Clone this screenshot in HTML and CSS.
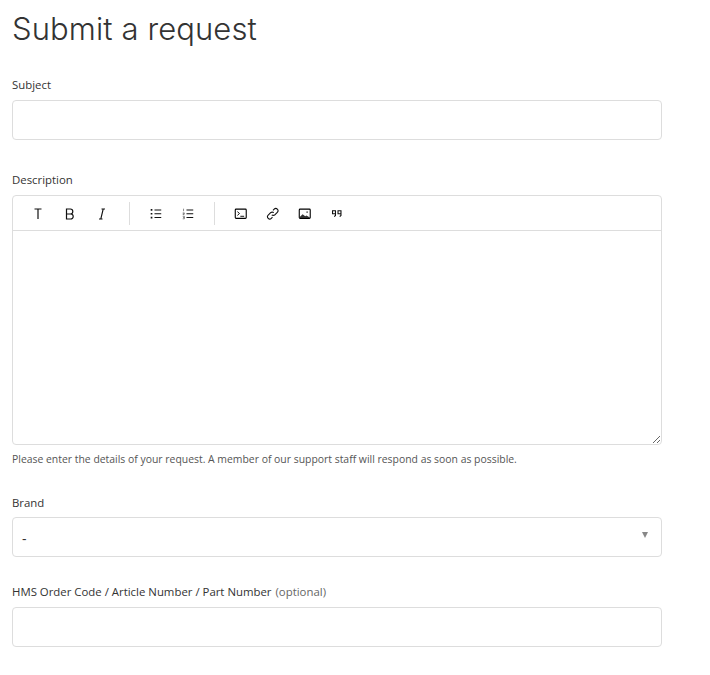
FILE: index.html
```html
<!DOCTYPE html>
<html lang="en">

<head>
  <meta charset="UTF-8" />
  <title>Submit a request</title>
  <meta name="viewport" content="width=device-width, initial-scale=1.0" />
  <link rel="stylesheet" href="styles.css">
</head>

<body>

  <div class="container">
    <h1>Submit a request</h1>
    <form id="requestForm">
      <div class="field">
        <label for="subject">Subject</label>
        <input type="text" id="subject" name="subject" />
      </div>

      <div class="field">
        <label for="description">Description</label>
        <div class="editor">
          <div class="toolbar">
            <div class="tool-group">
              <button type="button" class="tool" aria-label="Text">
                <svg width="16" height="16" viewBox="0 0 16 16"><path d="M4.5 3h7M8 3v10" fill="none" stroke="#111" stroke-width="1.2"/></svg>
              </button>
              <button type="button" class="tool" aria-label="Bold">
                <svg width="16" height="16" viewBox="0 0 16 16"><path d="M4.5 3h3.8a2.5 2.5 0 0 1 0 5H4.5zM4.5 8h4.2a2.5 2.5 0 0 1 0 5H4.5z" fill="none" stroke="#111" stroke-width="1.2"/></svg>
              </button>
              <button type="button" class="tool" aria-label="Italic">
                <svg width="16" height="16" viewBox="0 0 16 16"><path d="M7.5 3h3.5M5 13h3.5M9.2 3 6.8 13" fill="none" stroke="#111" stroke-width="1.1"/></svg>
              </button>
            </div>
            <div class="tool-group">
              <button type="button" class="tool icon-small" aria-label="Bulleted list">
                <svg viewBox="0 0 16 16"><path d="M6.5 3.5h8M6.5 8h8M6.5 12.5h8" fill="none" stroke="#111" stroke-width="1.2"/><path d="M2 2.5h2v2H2zM2 7h2v2H2zM2 11.5h2v2H2z" fill="#111"/></svg>
              </button>
              <button type="button" class="tool icon-small" aria-label="Numbered list">
                <svg viewBox="0 0 16 16"><path d="M6.5 3.5h8M6.5 8h8M6.5 12.5h8" fill="none" stroke="#111" stroke-width="1.2"/><path d="M3 2v3M2 7h2v1H2.4v1H4M2 11h2v3H2M2.4 12.5H4" fill="none" stroke="#555" stroke-width=".8"/></svg>
              </button>
            </div>
            <div class="tool-group">
              <button type="button" class="tool icon-small" aria-label="Code block">
                <svg viewBox="0 0 16 16"><rect x="1.5" y="2.5" width="13" height="11" rx="1" fill="none" stroke="#000" stroke-width="1.3"/><path d="m4 5.5 2.5 2.2L4 10M7.5 11H12" fill="none" stroke="#000" stroke-width="1.1"/></svg>
              </button>
              <button type="button" class="tool icon-small" aria-label="Link">
                <svg viewBox="0 0 16 16"><path d="M6.8 9.2a2.6 2.6 0 0 0 3.7 0l2.9-2.9a2.6 2.6 0 0 0-3.7-3.7L8.3 4M9.2 6.8a2.6 2.6 0 0 0-3.7 0l-2.9 2.9a2.6 2.6 0 0 0 3.7 3.7L7.7 12" fill="none" stroke="#111" stroke-width="1.3"/></svg>
              </button>
              <button type="button" class="tool icon-small" aria-label="Image">
                <svg viewBox="0 0 16 16"><rect x="1.5" y="2.5" width="13" height="11" rx="1" fill="none" stroke="#000" stroke-width="1.3"/><circle cx="10.8" cy="6" r="1" fill="#555"/><path d="M2 13v-1.2L5.5 8.5l3 2.6 1.6-1 3.9 2.4V13z" fill="#333"/></svg>
              </button>
              <button type="button" class="tool icon-small" aria-label="Quote">
                <svg viewBox="0 0 16 16"><path d="M3 4.5h3.5v3.5H3zM9.5 4.5H13v3.5H9.5zM6.5 7.5V10L5 11.5M13 7.5V10l-1.5 1.5" fill="none" stroke="#111" stroke-width="1.3"/></svg>
              </button>
            </div>
          </div>
          <div class="editor-body" id="description"></div>
        </div>
        <p class="hint">Please enter the details of your request. A member of our support staff will respond as soon as possible.</p>
      </div>

      <div class="field field-tight">
        <label for="brand" class="label-tight">Brand</label>
        <div class="select" id="brand">
          <span class="select-value">-</span>
          <span class="caret"></span>
        </div>
      </div>

      <div class="field">
        <label for="orderCode">HMS Order Code / Article Number / Part Number <span class="optional">(optional)</span></label>
        <input type="text" id="orderCode" name="orderCode" />
      </div>
    </form>
  </div>

</body>

</html>
```

FILE: styles.css
```css
* {
  margin: 0;
  padding: 0;
  box-sizing: border-box;
  font-family: "Open Sans", "Noto Sans", sans-serif;
}

body {
  background: #fff;
  color: #333;
  overflow: hidden;
}

.container {
  width: 662px;
  padding: 10px 0 0 12px;
}

h1 {
  font-family: "Inter", sans-serif;
  font-size: 31px;
  font-weight: 300;
  letter-spacing: 0.1px;
  line-height: 38px;
  color: #333;
  margin-bottom: 29px;
}

.field {
  margin-bottom: 32px;
}

.field-tight {
  margin-bottom: 27px;
}

label {
  display: block;
  font-size: 11.4px;
  line-height: 16px;
  margin-bottom: 7px;
  color: #333;
}

.label-tight {
  margin-bottom: 6px;
}

.optional {
  color: #666;
  margin-left: 1px;
}

input {
  display: block;
  width: 100%;
  height: 40px;
  border: 1px solid #ddd;
  border-radius: 4px;
  background: #fff;
}

.editor {
  border: 1px solid #ddd;
  border-radius: 4px;
  height: 250px;
  display: flex;
  flex-direction: column;
  resize: vertical;
  overflow: hidden;
}

.toolbar {
  display: flex;
  height: 35px;
  border-bottom: 1px solid #ddd;
  padding-top: 6px;
}

.tool-group {
  display: flex;
  height: 23px;
  padding: 0 10px;
  border-right: 1px solid #ddd;
}

.tool-group:first-child {
  padding: 0 11px 0 9px;
}

.tool-group:last-child {
  border-right: none;
}

.tool {
  width: 32px;
  height: 23px;
  border: none;
  background: none;
  display: flex;
  align-items: center;
  justify-content: center;
}

.icon-small svg {
  width: 13.5px;
  height: 13.5px;
}

.editor-body {
  flex: 1;
}

.hint {
  font-size: 10.42px;
  line-height: 16px;
  margin-top: 6px;
  margin-bottom: -4px;
  color: #555;
}

.select {
  height: 40px;
  border: 1px solid #ddd;
  border-radius: 4px;
  display: flex;
  align-items: center;
  justify-content: space-between;
  padding: 0 13px 0 9px;
  font-size: 12px;
  color: #333;
}

.select-value {
  font-size: 14px;
  padding-top: 2px;
}

.caret {
  width: 0;
  height: 0;
  border-left: 3px solid transparent;
  border-right: 3px solid transparent;
  border-top: 6px solid #888;
  margin-bottom: 4px;
}
```
